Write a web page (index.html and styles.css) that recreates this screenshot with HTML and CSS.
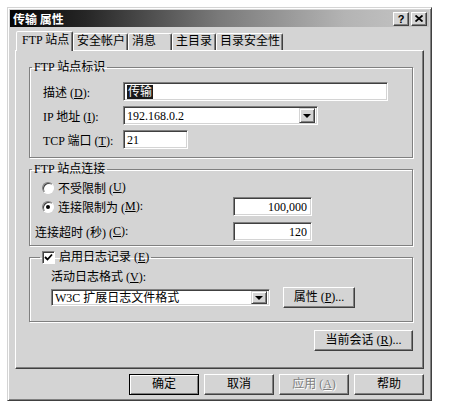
FILE: index.html
```html
<!DOCTYPE html>
<html lang="zh-CN">
<head>
    <meta charset="UTF-8">
    <title>传输 属性</title>
<link rel="stylesheet" href="styles.css">
</head>
<body>
<div class="dialog">
    <div class="titlebar">
        <span class="title">传输 属性</span>
        <div class="caption-btns">
            <span class="cap-btn help">?</span>
            <span class="cap-btn">
                <svg width="8" height="7" viewBox="0 0 8 7"><path d="M0.5 0.5 L7.5 6.5 M7.5 0.5 L0.5 6.5" stroke="#000" stroke-width="1.8" fill="none"/></svg>
            </span>
        </div>
    </div>

    <div class="content">
        <!-- tab strip -->
        <div class="tabs">
            <div class="tab active t1">FTP 站点</div>
            <div class="tab t2">安全帐户</div>
            <div class="tab t3">消息</div>
            <div class="tab t4">主目录</div>
            <div class="tab t5">目录安全性</div>
        </div>

        <div class="panel">
            <fieldset class="group g1">
                <legend>FTP 站点标识</legend>
                <div class="group-body">
                    <div class="row">
                        <span class="lbl">描述 (<u>D</u>):</span>
                        <div class="field w-desc"><span class="selected">传输</span></div>
                    </div>
                    <div class="row">
                        <span class="lbl">IP 地址 (<u>I</u>):</span>
                        <div class="field combo w-ip">
                            <span class="val">192.168.0.2</span>
                            <span class="drop"><i class="arrow"></i></span>
                        </div>
                    </div>
                    <div class="row">
                        <span class="lbl">TCP 端口 (<u>T</u>):</span>
                        <div class="field w-port"><span class="val">21</span></div>
                    </div>
                </div>
            </fieldset>

            <fieldset class="group g2">
                <legend>FTP 站点连接</legend>
                <div class="group-body">
                    <div class="crow r1">
                        <span class="opt"><i class="radio"></i>不受限制 (<u>U</u>)</span>
                    </div>
                    <div class="crow r2">
                        <span class="opt"><i class="radio on"></i>连接限制为 (<u>M</u>):</span>
                        <div class="field num"><span class="val">100,000</span></div>
                    </div>
                    <div class="crow r3">
                        <span class="lbl">连接超时 (秒) (<u>C</u>):</span>
                        <div class="field num"><span class="val">120</span></div>
                    </div>
                </div>
            </fieldset>

            <fieldset class="group g3">
                <legend><i class="check"><svg width="9" height="9" viewBox="0 0 9 9"><path d="M1 4 L3.5 6.5 L8 1.5" stroke="#000" stroke-width="1.8" fill="none"/></svg></i>启用日志记录 (<u>E</u>)</legend>
                <div class="group-body">
                    <div class="log-label">活动日志格式 (<u>V</u>):</div>
                    <div class="log-row">
                        <div class="field combo w-log">
                            <span class="val">W3C 扩展日志文件格式</span>
                            <span class="drop"><i class="arrow"></i></span>
                        </div>
                        <button class="btn btn-prop">属性 (<u>P</u>)...</button>
                    </div>
                </div>
            </fieldset>

            <div class="session-row">
                <button class="btn btn-session">当前会话 (<u>R</u>)...</button>
            </div>
        </div>

        <div class="footer">
            <button class="btn default">确定</button>
            <button class="btn">取消</button>
            <button class="btn disabled">应用 (<u>A</u>)</button>
            <button class="btn">帮助</button>
        </div>
    </div>
</div>
</body>
</html>
```

FILE: styles.css
```css
:root {
  --face: #d4d4d4;
  --shadow: #808080;
  --dark: #404040;
  --light: #ffffff;
}

body {
  margin: 0;
  background: #fff;
  font-family: "Liberation Serif", "Noto Sans CJK SC", serif;
  font-size: 12px;
  color: #000;
}

/* window frame */
.dialog {
  margin: 7px 0 0 7px;
  width: 419px;
  padding: 2px;
  background: var(--face);
  border: 1px solid;
  border-color: var(--face) var(--dark) var(--dark) var(--face);
  box-shadow: inset 1px 1px 0 var(--light), inset -1px -1px 0 var(--shadow);
}

.titlebar {
  height: 17px;
  display: flex;
  align-items: center;
  justify-content: space-between;
  padding: 0 2px 0 3px;
  background: linear-gradient(90deg, #050505 0%, #262626 18%, #7a7a7a 50%, #b4b4b4 80%, #c6c6c6 100%);
}
.title {
  color: #fff;
  font-weight: bold;
  font-family: "Noto Sans CJK SC", sans-serif;
  font-size: 12px;
  line-height: 17px;
}
.caption-btns {
  display: flex;
  gap: 2px;
}
.cap-btn {
  width: 16px;
  height: 14px;
  box-sizing: border-box;
  display: flex;
  align-items: center;
  justify-content: center;
  background: var(--face);
  border: 1px solid;
  border-color: var(--light) var(--dark) var(--dark) var(--light);
  box-shadow: inset -1px -1px 0 var(--shadow);
  font-family: "Liberation Sans", sans-serif;
  font-weight: bold;
  font-size: 11px;
  line-height: 12px;
}

.content {
  padding: 4px 5px 3px;
}

/* tabs */
.tabs {
  display: flex;
  align-items: flex-end;
  height: 19px;
  padding-left: 1px;
  position: relative;
  z-index: 1;
}
.tab {
  box-sizing: border-box;
  height: 17px;
  line-height: 15px;
  padding-left: 3px;
  border: 1px solid;
  border-bottom: none;
  border-color: var(--light) var(--dark) transparent var(--light);
  box-shadow: inset -1px 0 0 var(--shadow);
  border-radius: 2px 2px 0 0;
  background: var(--face);
  white-space: nowrap;
  overflow: hidden;
}
.tab.active {
  height: 20px;
  line-height: 17px;
  margin-bottom: -1px;
  padding-left: 5px;
}
.t1 { width: 57px; }
.t2 { width: 55px; }
.t3 { width: 44px; }
.t4 { width: 44px; }
.t5 { width: 67px; }

.panel {
  border: 1px solid;
  border-color: var(--light) var(--dark) var(--dark) var(--light);
  box-shadow: inset -1px -1px 0 var(--shadow);
  padding: 9px 10px 17px 13px;
}

/* group boxes */
.group {
  margin: 0;
  padding: 0;
  border: 1px solid var(--shadow);
  box-shadow: 1px 1px 0 var(--light), inset 1px 1px 0 var(--light);
  min-width: 0;
}
.group legend {
  padding: 0 2px;
  margin-left: 2px;
  line-height: 14px;
  height: 14px;
}
.g2 { margin-top: 4px; }
.g3 { margin-top: 4px; }

.group-body {
  display: flex;
  flex-direction: column;
}
.g1 .group-body {
  padding: 8px 0 8px 13px;
  gap: 5px;
}
.row {
  display: flex;
  align-items: center;
  height: 19px;
}
.lbl {
  width: 80px;
  white-space: nowrap;
}

/* sunken edit fields */
.field {
  box-sizing: border-box;
  height: 19px;
  background: #fff;
  border: 1px solid;
  border-color: var(--shadow) var(--light) var(--light) var(--shadow);
  box-shadow: inset 1px 1px 0 var(--dark), inset -1px -1px 0 var(--face);
  display: flex;
  align-items: center;
  padding-left: 3px;
  white-space: nowrap;
}
.val {
  line-height: 14px;
}
.w-desc { width: 265px; }
.w-ip { width: 195px; }
.w-port { width: 65px; }
.selected {
  background: #1a1a1a;
  color: #fff;
  line-height: 14px;
  padding: 0 1px;
}
.combo {
  justify-content: space-between;
  padding-right: 2px;
}
.drop {
  box-sizing: border-box;
  width: 16px;
  height: 15px;
  display: flex;
  align-items: center;
  justify-content: center;
  background: var(--face);
  border: 1px solid;
  border-color: var(--face) var(--dark) var(--dark) var(--face);
  box-shadow: inset 1px 1px 0 var(--light), inset -1px -1px 0 var(--shadow);
}
.arrow {
  width: 0;
  height: 0;
  border-left: 4px solid transparent;
  border-right: 4px solid transparent;
  border-top: 4px solid #000;
}

/* connection group */
.g2 .group-body {
  padding: 3px 0 4px 5px;
}
.crow {
  display: flex;
  align-items: center;
}
.crow .opt,
.crow .lbl {
  width: 198px;
  display: flex;
  align-items: center;
  white-space: nowrap;
}
.crow .opt { padding-left: 7px; width: 191px; }
.r1 { height: 17px; }
.r2 { height: 19px; margin-top: 1px; }
.r3 { height: 19px; margin-top: 6px; }
.num {
  width: 79px;
  justify-content: flex-end;
  padding-right: 4px;
}
.radio {
  box-sizing: border-box;
  width: 12px;
  height: 12px;
  border-radius: 50%;
  background: #fff;
  border: 1px solid;
  border-color: var(--shadow) var(--light) var(--light) var(--shadow);
  box-shadow: inset 1px 1px 0 var(--dark);
  margin-right: 4px;
  display: flex;
  align-items: center;
  justify-content: center;
}
.radio.on::after {
  content: "";
  width: 4px;
  height: 4px;
  border-radius: 50%;
  background: #000;
}

/* logging group */
.g3 legend {
  margin-left: 10px;
  display: flex;
  align-items: center;
}
.check {
  box-sizing: border-box;
  width: 13px;
  height: 13px;
  background: #fff;
  border: 1px solid;
  border-color: var(--shadow) var(--light) var(--light) var(--shadow);
  box-shadow: inset 1px 1px 0 var(--dark);
  display: flex;
  align-items: center;
  justify-content: center;
  margin-right: 4px;
}
.g3 .group-body {
  padding: 6px 0 13px 21px;
}
.log-label {
  line-height: 14px;
  height: 14px;
}
.log-row {
  margin-top: 3px;
  display: flex;
  align-items: center;
  gap: 13px;
  height: 21px;
}
.w-log { width: 219px; height: 17px; }
.w-log .drop { height: 13px; }

/* buttons */
.btn {
  box-sizing: border-box;
  height: 21px;
  background: var(--face);
  border: 1px solid;
  border-color: var(--light) var(--dark) var(--dark) var(--light);
  box-shadow: inset -1px -1px 0 var(--shadow);
  font-family: inherit;
  font-size: 12px;
  color: #000;
  padding: 0;
  line-height: 17px;
  white-space: nowrap;
}
.btn-prop { width: 72px; }
.session-row {
  display: flex;
  justify-content: flex-end;
  margin-top: 8px;
}
.btn-session { width: 99px; }

.footer {
  display: flex;
  justify-content: flex-end;
  gap: 5px;
  margin-top: 5px;
}
.footer .btn { width: 70px; }
.btn.default {
  outline: 1px solid #000;
  outline-offset: -1px;
  border-color: #000;
  box-shadow: inset 1px 1px 0 var(--light), inset -1px -1px 0 var(--shadow);
}
.btn.disabled {
  color: var(--shadow);
  text-shadow: 1px 1px 0 var(--light);
}
```
